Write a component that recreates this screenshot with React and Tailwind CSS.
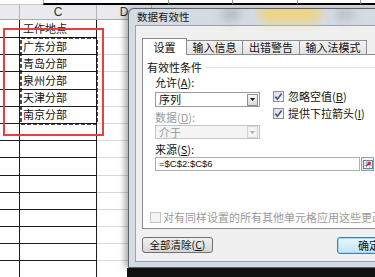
import React from "react";

const rowHeights = [18, 17.2, 17.2, 17.2, 17.2, 17.2, 17.2, 17.2, 17.2, 17.2, 17.2, 17.2, 17.2, 17.2, 17.2];
const cellText = ["工作地点", "广东分部", "青岛分部", "泉州分部", "天津分部", "南京分部"];

function Check({ checked, disabled }) {
  return (
    <span
      className={
        "w-[11px] h-[11px] shrink-0 border flex items-center justify-center " +
        (disabled
          ? "border-[#c4c4c4] bg-[#f4f4f4]"
          : "border-[#8e8f8f] bg-linear-to-br from-[#dcdcdc] to-[#fbfbfb]")
      }
    >
      {checked && (
        <svg width="9" height="9" viewBox="0 0 9 9">
          <path d="M1.3 4.6 L3.4 7.2 L7.7 1.4" stroke="#3d5aa0" strokeWidth="1.7" fill="none" />
        </svg>
      )}
    </span>
  );
}

function DropBtn({ disabled }) {
  return (
    <span
      className={
        "w-[11px] h-[12px] mr-[1px] border flex items-center justify-center " +
        (disabled
          ? "border-[#d0d0d0] bg-[#f4f4f4]"
          : "border-[#8d8d8d] bg-linear-to-b from-[#f6f6f6] to-[#dadada]")
      }
    >
      <svg width="5" height="3" viewBox="0 0 5 3">
        <path d="M0 0 H5 L2.5 3 Z" fill={disabled ? "#b0b0b0" : "#111"} />
      </svg>
    </span>
  );
}

export default function App() {
  return (
    <div className="relative w-[375px] h-[277px] overflow-hidden bg-white font-['Noto_Sans_CJK_SC',sans-serif] text-[#111]">
      {/* top strip */}
      <div className="flex h-[5px]">
        <div className="w-[43px] border-b border-[#c8c8c8]" />
        <div className="w-[125px] border-l border-[#9a9a9a] border-b-2 border-b-black" />
        <div className="w-[64px] border-l border-[#9a9a9a] border-b-2 border-b-black" />
        <div className="w-[65px] border-l border-[#9a9a9a] border-b-2 border-b-black" />
        <div className="w-[63px] border-l border-[#9a9a9a] border-b-2 border-b-black" />
        <div className="flex-1 border-l border-[#9a9a9a] border-b-2 border-b-black" />
      </div>
      {/* column header */}
      <div className="flex h-[15px] bg-[#e8eaed] border-b border-[#a9adb2] text-[12px] font-['Liberation_Sans',sans-serif] text-[#333] leading-none">
        <div className="w-[20px] border-r border-[#b3b6ba]" />
        <div className="w-[77px] border-r border-[#b3b6ba] flex items-center justify-center">C</div>
        <div className="w-[55px] border-r border-[#b3b6ba] flex items-center justify-center">D</div>
        <div className="flex-1" />
      </div>
      {/* rows */}
      {rowHeights.map((h, i) => (
        <div key={i} className="flex" style={{ height: h }}>
          <div className="w-[20px] border-r border-b border-[#1c1c1c]" />
          <div className="w-[77px] border-r border-b border-[#1c1c1c] pl-[3px] flex items-center text-[11px] leading-none">
            {cellText[i] || ""}
          </div>
          <div className="w-[55px] border-r border-b border-[#d6d8da]" />
          <div className="flex-1 border-b border-[#d6d8da]" />
        </div>
      ))}

      {/* marching ants */}
      <svg className="absolute left-[20px] top-[37px]" width="78" height="88" viewBox="0 0 78 88">
        <rect x="1" y="1" width="76" height="86" fill="none" stroke="#111" strokeWidth="1.5" strokeDasharray="4 2" />
      </svg>
      {/* red highlight */}
      <div className="absolute left-[3px] top-[28px] w-[101px] h-[108px] border-2 border-[#e5403f]" />

      {/* dialog */}
      <div className="absolute left-[128px] top-[8px] w-[262px] h-[260px] rounded-tl-[6px] border border-[#5d636b] bg-[#d5dbe2] shadow-[-3px_0_6px_rgba(0,0,0,0.35)] flex flex-col overflow-hidden">
        <div className="relative h-[16px] pl-[8px] flex items-center text-[10.5px] leading-none text-[#1a1a1a]">
          <div className="absolute left-[130px] top-[-4px] w-[62px] h-[18px] rounded-full bg-[#f2d36e] blur-[5px] opacity-80" />
          <div className="absolute left-[92px] top-[-2px] w-[20px] h-[14px] rounded-full bg-[#aab0b7] blur-[5px] opacity-70" />
          <div className="absolute left-[206px] top-[-2px] w-[20px] h-[14px] rounded-full bg-[#b4b8bd] blur-[5px] opacity-70" />
          <span className="relative">数据有效性</span>
        </div>
        <div className="ml-[6px] mb-[5px] flex-1 border border-[#9aa3ad] bg-[#f0f0f0] pt-[12px] pl-[6px] flex flex-col text-[11px] leading-none">
          {/* tabs */}
          <div className="flex items-end h-[16px]">
            <div className="w-[45px] h-[17px] -mb-px relative z-10 border border-b-0 border-[#898c95] bg-white flex items-center justify-center">设置</div>
            <div className="w-[56px] h-[14px] border border-l-0 border-b-0 border-[#898c95] bg-linear-to-b from-[#f3f3f3] to-[#e3e3e3] flex items-center justify-center">输入信息</div>
            <div className="w-[57px] h-[14px] border border-l-0 border-b-0 border-[#898c95] bg-linear-to-b from-[#f3f3f3] to-[#e3e3e3] flex items-center justify-center">出错警告</div>
            <div className="w-[67px] h-[14px] border border-l-0 border-b-0 border-[#898c95] bg-linear-to-b from-[#f3f3f3] to-[#e3e3e3] flex items-center justify-center">输入法模式</div>
          </div>
          {/* panel */}
          <div className="w-[260px] h-[175px] border border-[#898c95] bg-white flex flex-col">
            <div className="mt-[6px] ml-[4px] h-[12px] flex items-center">
              <span className="whitespace-nowrap">有效性条件</span>
              <span className="ml-[4px] flex-1 h-px bg-[#dde3e8]" />
            </div>
            <div className="mt-[3px] ml-[12px] h-[12px] flex items-center">
              <span className="whitespace-nowrap">允许(<span className="underline">A</span>):</span>
            </div>
            <div className="flex ml-[12px]">
              <div className="flex flex-col">
                <div className="mt-[4px] w-[105px] h-[15px] border border-[#9b9b9b] bg-white flex items-center justify-between pl-[3px]">
                  <span>序列</span>
                  <DropBtn />
                </div>
                <div className="mt-[4px] h-[12px] flex items-center text-[#9a9a9a]">
                  <span className="whitespace-nowrap">数据(<span className="underline">D</span>):</span>
                </div>
                <div className="mt-[2px] w-[105px] h-[14px] border border-[#c5c5c5] bg-[#f4f4f4] flex items-center justify-between pl-[3px] text-[#9a9a9a]">
                  <span>介于</span>
                  <DropBtn disabled />
                </div>
              </div>
              <div className="ml-[13px] mt-[2px] flex flex-col gap-[5px]">
                <div className="h-[12px] flex items-center gap-[4px]">
                  <Check checked />
                  <span className="whitespace-nowrap">忽略空值(<span className="underline">B</span>)</span>
                </div>
                <div className="h-[12px] flex items-center gap-[4px]">
                  <Check checked />
                  <span className="whitespace-nowrap">提供下拉箭头(<span className="underline">I</span>)</span>
                </div>
              </div>
            </div>
            <div className="mt-[4px] ml-[12px] h-[12px] flex items-center">
              <span className="whitespace-nowrap">来源(<span className="underline">S</span>):</span>
            </div>
            <div className="mt-[2px] ml-[12px] flex items-center">
              <div className="w-[205px] h-[14px] border border-[#abadb3] bg-white flex items-center pl-[3px] text-[9.5px] font-['Liberation_Sans',sans-serif]">
                =$C$2:$C$6
              </div>
              <span className="ml-[1px] w-[13px] h-[14px] border border-[#8aa0bd] bg-linear-to-b from-[#eef3f9] to-[#d6e2ef] flex items-center justify-center">
                <svg width="10" height="9" viewBox="0 0 10 9">
                  <rect x="0.5" y="0.5" width="9" height="8" fill="#fff" stroke="#5f7aa3" />
                  <path d="M0.5 3 H9.5 M0.5 5.5 H9.5 M3.5 0.5 V8.5 M6.5 0.5 V8.5" stroke="#9fb2cc" strokeWidth="0.8" />
                  <path d="M3 6 L7 2.5 M4.5 2.5 H7 V5" stroke="#d8262c" strokeWidth="1.4" fill="none" />
                </svg>
              </span>
            </div>
            <div className="mt-[40px] ml-[7px] h-[12px] flex items-center gap-[2px] text-[#9a9a9a]">
              <Check disabled />
              <span className="whitespace-nowrap">对有同样设置的所有其他单元格应用这些更改(</span>
            </div>
          </div>
          {/* buttons */}
          <div className="mt-[8px] flex">
            <div className="w-[71px] h-[16px] shrink-0 rounded-[3px] border border-[#707070] bg-linear-to-b from-[#f2f2f2] to-[#d5d5d5] flex items-center justify-center text-[10.5px]">
              <span className="whitespace-nowrap">全部清除(<span className="underline">C</span>)</span>
            </div>
            <div className="ml-[124px] w-[64px] h-[17px] shrink-0 rounded-[3px] border border-[#3c7fb1] bg-linear-to-b from-[#eaf6fd] to-[#bee6fd] shadow-[inset_0_0_0_1px_#a8d8f5] flex items-center justify-center">
              <span className="whitespace-nowrap">确定</span>
            </div>
          </div>
        </div>
      </div>
      {/* bottom dark strip */}
      <div className="absolute left-[127px] top-[268px] right-0 bottom-0 bg-[#111]" />
    </div>
  );
}
